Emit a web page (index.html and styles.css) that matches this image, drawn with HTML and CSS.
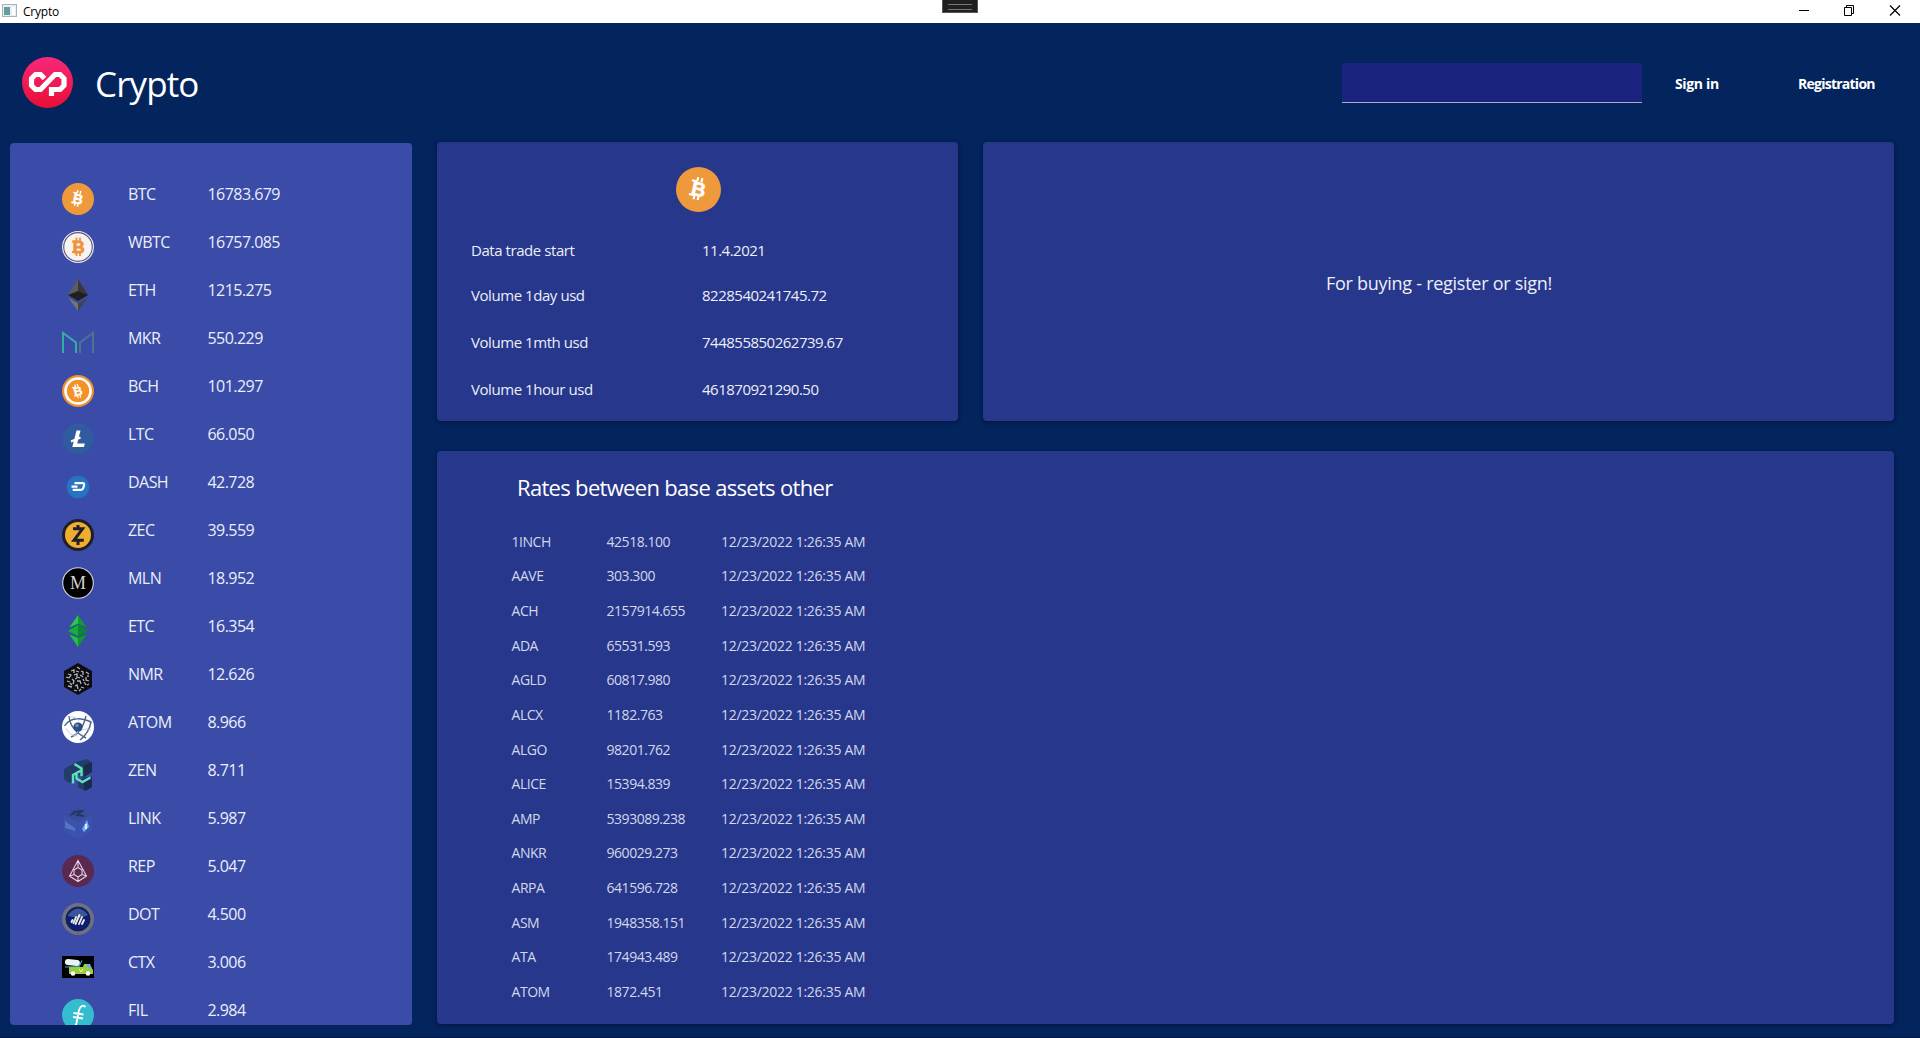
FILE: index.html
```html
<!DOCTYPE html>
<html lang="en">
<head>
<meta charset="utf-8">
<title>Crypto</title>
<link rel="stylesheet" href="styles.css">
</head>
<body>
<div class="titlebar">
  <svg class="app-icon" width="16" height="14" viewBox="0 0 16 14"><rect x=".5" y=".5" width="14" height="12" fill="#e9eef2" stroke="#a9b2ba"/><rect x="2" y="3" width="6" height="8" fill="#5f9f9c"/><rect x="10" y="3" width="3" height="8" fill="#fff"/></svg>
  <span class="app-name">Crypto</span>
  <svg class="window-buttons" width="104" height="14" viewBox="0 0 104 14" fill="none" stroke="#000" stroke-width="1"><path d="M0 7.500h10M45.500 4.500h7v8h-7zM47.500 4.500v-2h7v8h-2"/><path stroke-width="1.200" d="M91 2.500l10 10M101 2.500l-10 10"/></svg>
  <div class="debug-handle"></div>
</div>
<header class="header">
  <svg class="logo" width="51" height="51" viewBox="0 0 51 51"><defs><linearGradient id="lg" x1="0" y1="0" x2="0" y2="1"><stop offset="0" stop-color="#f6287a"/><stop offset="1" stop-color="#e80f35"/></linearGradient></defs><circle cx="25.500" cy="25.500" r="25.500" fill="url(#lg)"/><path d="M22.500 21.500l-4-4h-5L9.500 21.500v7l4 4h5L33 17.500h5l4 4v7L38 32.500h-8.500V39" fill="none" stroke="#fff" stroke-width="5.200"/></svg>
  <h1 class="brand">Crypto</h1>
  <input class="search" type="text" aria-label="Search">
  <a class="link sign">Sign in</a>
  <a class="link registration">Registration</a>
</header>
<main class="main">
  <ul class="coins">
    <li><svg class="icon" viewBox="0 0 32 32"><circle cx="16" cy="16" r="16" fill="#ee9a3c"/><g transform="rotate(12 16 16)" fill="#fff" stroke="#fff" stroke-width="1.500"><path d="M14 7.500v3M17 7.500v3M14 20.500v3M17 20.500v3M10 10.500h4M10 20.500h4"/><text class="glyph" x="16" y="20.800" font-size="14" stroke-width=".4">B</text></g></svg><span>BTC</span><span>16783.679</span></li>
    <li><svg class="icon" viewBox="0 0 32 32"><circle cx="16" cy="16" r="16" fill="#ececf2"/><circle cx="16" cy="16" r="14.300" fill="#f6f3f2" stroke="#5d587c" stroke-width="1.200"/><g fill="#f0923a" stroke="#f0923a" stroke-width="1.900"><path d="M14.500 6.500v4M18 6.500v4M14.500 21v4M18 21v4M10 10.500h5M10 21h5"/><text class="glyph" x="16.800" y="21.800" font-size="16.500" stroke-width=".8">B</text></g></svg><span>WBTC</span><span>16757.085</span></li>
    <li><svg class="icon" viewBox="0 0 32 32"><path d="M16 0L6 16l10 6z" fill="#5d5d5d"/><path d="M16 0l10 16-10 6z" fill="#393939"/><path d="M6 16l10-4 10 4-10 6z" fill="#202022"/><path d="M6 18.500l10 6V32z" fill="#747474"/><path d="M26 18.500l-10 6V32z" fill="#444"/></svg><span>ETH</span><span>1215.275</span></li>
    <li><svg class="icon" viewBox="0 0 32 32" fill="none" stroke-width="2"><path d="M1 26V6l13 9.500V26" stroke="#38ad9f"/><path d="M18 26V15.500L31 6v20" stroke="#4d7390"/></svg><span>MKR</span><span>550.229</span></li>
    <li><svg class="icon" viewBox="0 0 32 32"><circle cx="16" cy="16" r="16" fill="#f0902d"/><circle cx="16" cy="16" r="12.500" fill="#f39229" stroke="#fff" stroke-width="2.700"/><g transform="rotate(-14 16 16)" fill="#fff" stroke="#fff" stroke-width="1.300"><path d="M14.500 9v3M17 9v3M14.500 20v3M17 20v3M11 11.500h4M11 20h4"/><text class="glyph" x="16" y="20.300" font-size="12" stroke-width=".3">B</text></g></svg><span>BCH</span><span>101.297</span></li>
    <li><svg class="icon" viewBox="0 0 32 32"><circle cx="16" cy="16" r="15.500" fill="#315b9f"/><path d="M14.500 7.500h4l-3.300 13h7.600l-.8 3.500H10.300z" fill="#fff"/><path d="M9 18.500l9.500-4" stroke="#fff" stroke-width="2.200"/></svg><span>LTC</span><span>66.050</span></li>
    <li><svg class="icon" viewBox="0 0 32 32"><circle cx="16" cy="16" r="11.300" fill="#2573c2"/><path d="M12.500 12.200h8.200q1.800 0 1.400 1.800l-.8 3q-.5 1.900-2.300 1.900h-8.300M9.500 15.700h6" fill="none" stroke="#fff" stroke-width="2.200"/></svg><span>DASH</span><span>42.728</span></li>
    <li><svg class="icon" viewBox="0 0 32 32"><circle cx="16" cy="16" r="14.500" fill="#efae30" stroke="#211e29" stroke-width="3"/><path d="M11 9.800h9.500L12 21.300h9.800M16 6v4M16 21v5" fill="none" stroke="#211e29" stroke-width="3"/></svg><span>ZEC</span><span>39.559</span></li>
    <li><svg class="icon" viewBox="0 0 32 32"><circle cx="16" cy="16" r="15.300" fill="#000" stroke="#d6d6de" stroke-width="1.100"/><text class="serif" x="16" y="22" font-size="18" fill="#d2d2d2">M</text></svg><span>MLN</span><span>18.952</span></li>
    <li><svg class="icon" viewBox="0 0 32 32"><path d="M16 0L7 13l9-4z" fill="#2fc653"/><path d="M16 0l9 13-9-4z" fill="#139a35"/><path d="M6 16l10-6v11z" fill="#18ad3d"/><path d="M26 16l-10-6v11z" fill="#0b8930"/><path d="M7 19l9 4v9z" fill="#27bd4b"/><path d="M25 19l-9 4v9z" fill="#12982f"/><path d="M7 13l9-4 9 4M7 19l9 3 9-3" fill="none" stroke="#107a40" stroke-width="1"/></svg><span>ETC</span><span>16.354</span></li>
    <li><svg class="icon" viewBox="0 0 32 32"><path d="M16 0l14 8v16l-14 8-14-8V8z" fill="#0b0c12"/><path d="M15 4l3 2M9 8l3-1v3M19 8l2 1v3M24 9l3 2M6 11l3 1-2 3M12 12l3-1v3l3 1M18 12l3 2M24 14v3l3 1M5 18l3 1M10 16l2 2-1 3M15 18h3l1 3M22 19l2 3M6 23l4 1M13 23l2-1 1 4M19 24l3 1M25 22l2-1M12 27l3 1M17 28l2-2M14 8l3 1M4 14l3 1M21 16l1 2M8 20l2 2M15 15l-2 1M26 12v2" fill="none" stroke="#b6b5b9" stroke-width="1.300"/></svg><span>NMR</span><span>12.626</span></li>
    <li><svg class="icon" viewBox="0 0 32 32"><circle cx="16" cy="16" r="16" fill="#fff"/><g fill="none" stroke="#49658d" stroke-width="1.400"><path d="M2.500 15Q10 3 29 11Q27 22 18 29M7 5Q8 19 24 27M9 26Q20 22 24 5"/><path d="M7 6q7-1 10 4M29 19q-8-4-17 6M4 17q3 8 12 8" stroke="#bcc6d3" stroke-width=".8"/></g><circle cx="16" cy="16" r="4.600" fill="#294c84"/><circle cx="15" cy="14.500" r="1.700" fill="#7390b8"/></svg><span>ATOM</span><span>8.966</span></li>
    <li><svg class="icon" viewBox="0 0 32 32"><path d="M12 4l13-4 5 4v9l-8 5-7-3zM2 10l9-5 6 5-2 10-8 4-5-4zM16 23l5-5h9v10l-7 4-7-4z" fill="#223d68"/><path d="M22 6l8-3v10l-8 5zM21 22l9-4v10l-7 4z" fill="#192b50"/><path d="M12.500 5l7 4.500V17M11 24.500V16l8-4.500M14.500 14v5.500l6 3.500 8-4.500" fill="none" stroke="#5de2ba" stroke-width="2.400"/></svg><span>ZEN</span><span>8.711</span></li>
    <li><svg class="icon" viewBox="0 0 32 32"><path d="M16 1l14 7v16l-14 8-14-8V8z" fill="#3b52ae"/><path d="M16 1l14 7-14 7L2 8z" fill="#384d9a"/><path d="M11 5l9-1-5 4 7 1M8 8l5-2" fill="none" stroke="#253662" stroke-width="1.800"/><path d="M3 14l10 7v3L3 21z" fill="#5674c4"/><path d="M20 22l5-9 2 7-5 5z" fill="#70b0ee"/><path d="M24 17v5" stroke="#fff" stroke-width="1.500"/><path d="M16 15v17" stroke="#3152a0"/></svg><span>LINK</span><span>5.987</span></li>
    <li><svg class="icon" viewBox="0 0 32 32"><circle cx="16" cy="16" r="16" fill="#5b2850"/><path d="M16 5.500L7.500 21l8.500 5.500 8.500-5.500zM12 15l4-2.500 4 2.500v4.500L16 22l-4-2.500zM16 5.500v7M7.500 21l4.500-1.500M24.500 21L20 19.500M16 22v4.500" fill="none" stroke="#e5cfe0" stroke-width="1.100"/></svg><span>REP</span><span>5.047</span></li>
    <li><svg class="icon" viewBox="0 0 32 32"><circle cx="16" cy="16" r="14" fill="#0c1d75" stroke="#6d7181" stroke-width="4"/><circle cx="16" cy="16" r="12" fill="none" stroke="#17203d" stroke-width="1"/><path d="M6 12q10-13 20 0-6 4-20 1z" fill="#3c559a"/><path d="M10.500 17l-1 2M14 14l-2.500 6M17.500 12l-4 9M20 14l-3 7M22 17l-2 4" stroke="#ecebe0" stroke-width="1.900" stroke-linecap="round"/></svg><span>DOT</span><span>4.500</span></li>
    <li><svg class="icon" viewBox="0 0 32 32"><path d="M0 5h32v22H0z" fill="#000"/><path d="M7 16h14l1-3h5l4 6v4H7z" fill="#9dce39"/><path d="M25 13h3l2 5-5-1z" fill="#65b9d3"/><rect x="3" y="8.500" width="15" height="6" rx="3" fill="#e7f4ef" transform="rotate(6 10 11)"/><path d="M3 16l14-.500 3-6" fill="none" stroke="#48a9cd" stroke-width="1.200"/><circle cx="11" cy="22.500" r="2.300" fill="#fff"/><circle cx="26" cy="22.500" r="2.300" fill="#fff"/><path d="M17 18l2 3 2-3" fill="none" stroke="#f2f8cf"/></svg><span>CTX</span><span>3.006</span></li>
    <li><svg class="icon" viewBox="0 0 32 32"><circle cx="16" cy="16" r="16" fill="#35bdcf"/><path d="M23.500 8q-4-3.500-6.500 3l-2.500 13q-1.500 5-5 2.500M11.500 14l10 1.500M11 18l10 1.500" fill="none" stroke="#fff" stroke-width="1.800"/></svg><span>FIL</span><span>2.984</span></li>
  </ul>
  <div class="content">
    <section class="card details">
      <svg class="coin-large" viewBox="0 0 32 32"><circle cx="16" cy="16" r="16" fill="#ee9a3c"/><g transform="rotate(12 16 16)" fill="#fff" stroke="#fff" stroke-width="1.500"><path d="M14 7.500v3M17 7.500v3M14 20.500v3M17 20.500v3M10 10.500h4M10 20.500h4"/><text class="glyph" x="16" y="20.800" font-size="14" stroke-width=".4">B</text></g></svg>
      <dl class="facts">
        <dt>Data trade start</dt><dd>11.4.2021</dd>
        <dt>Volume 1day usd</dt><dd>8228540241745.72</dd>
        <dt>Volume 1mth usd</dt><dd>744855850262739.67</dd>
        <dt>Volume 1hour usd</dt><dd>461870921290.50</dd>
      </dl>
    </section>
    <section class="card notice"><p>For buying - register or sign!</p></section>
    <section class="card rates">
      <h2>Rates between base assets other</h2>
      <ul>
        <li><span>1INCH</span><span>42518.100</span><span class="date">12/23/2022 1:26:35 AM</span></li>
        <li><span>AAVE</span><span>303.300</span><span class="date">12/23/2022 1:26:35 AM</span></li>
        <li><span>ACH</span><span>2157914.655</span><span class="date">12/23/2022 1:26:35 AM</span></li>
        <li><span>ADA</span><span>65531.593</span><span class="date">12/23/2022 1:26:35 AM</span></li>
        <li><span>AGLD</span><span>60817.980</span><span class="date">12/23/2022 1:26:35 AM</span></li>
        <li><span>ALCX</span><span>1182.763</span><span class="date">12/23/2022 1:26:35 AM</span></li>
        <li><span>ALGO</span><span>98201.762</span><span class="date">12/23/2022 1:26:35 AM</span></li>
        <li><span>ALICE</span><span>15394.839</span><span class="date">12/23/2022 1:26:35 AM</span></li>
        <li><span>AMP</span><span>5393089.238</span><span class="date">12/23/2022 1:26:35 AM</span></li>
        <li><span>ANKR</span><span>960029.273</span><span class="date">12/23/2022 1:26:35 AM</span></li>
        <li><span>ARPA</span><span>641596.728</span><span class="date">12/23/2022 1:26:35 AM</span></li>
        <li><span>ASM</span><span>1948358.151</span><span class="date">12/23/2022 1:26:35 AM</span></li>
        <li><span>ATA</span><span>174943.489</span><span class="date">12/23/2022 1:26:35 AM</span></li>
        <li><span>ATOM</span><span>1872.451</span><span class="date">12/23/2022 1:26:35 AM</span></li>
      </ul>
    </section>
  </div>
</main>
</body>
</html>
```

FILE: styles.css
```css
* { box-sizing: border-box; margin: 0; padding: 0; }
body {
  width: 1920px;
  height: 1038px;
  overflow: hidden;
  background: #03245c;
  color: #eceef8;
  font: 16px/22px "Open Sans", "Noto Sans", sans-serif;
  letter-spacing: -0.55px;
}
ul { list-style: none; }

.titlebar {
  position: relative;
  display: flex;
  align-items: flex-start;
  height: 23px;
  background: #fff;
  color: #000;
}
.app-icon { margin: 4px 0 0 2px; }
.app-name { margin-left: 5px; font-size: 12px; line-height: 23px; letter-spacing: -0.2px; }
.window-buttons { margin: 3px 17px 0 auto; }
.debug-handle {
  position: absolute;
  left: 942px;
  top: 0;
  width: 36px;
  height: 13px;
  border: 1px solid #555;
  border-top: 0;
  background: #202020;
}
.debug-handle::before {
  content: "";
  display: block;
  width: 24px;
  height: 4px;
  margin: 4px auto 0;
  border: solid #777;
  border-width: 1px 0;
}

.header { display: flex; align-items: flex-start; height: 119px; padding: 34px 0 0 22px; }
.brand {
  width: 180px;
  margin-left: 22px;
  color: #fff;
  font-size: 35px;
  font-weight: 400;
  line-height: 54px;
  letter-spacing: -0.9px;
}
.search {
  width: 300px;
  height: 40px;
  margin: 6px 0 0 auto;
  border: 0;
  border-bottom: 1px solid #a4aed0;
  border-radius: 2px 2px 0 0;
  background: #1a237e;
}
.link { color: #fff; font-size: 14px; font-weight: 700; line-height: 22px; margin-top: 16px; white-space: nowrap; letter-spacing: -0.75px; }
.sign { width: 123px; margin-left: 33px; letter-spacing: -0.35px; }
.registration { width: 122px; }

.main { display: flex; gap: 25px; height: 896px; padding-left: 10px; border-bottom: 1px solid #021a45; }
.coins {
  width: 402px;
  height: 882px;
  margin-top: 1px;
  padding: 40px 0 0 52px;
  overflow: hidden;
  border-radius: 4px;
  background: #3a4ca8;
}
.coins li { display: grid; grid-template-columns: 66px 79.500px 1fr; height: 48px; align-items: start; }
.icon { width: 32px; height: 32px; }
.glyph { font-family: "Liberation Sans", sans-serif; font-weight: 700; text-anchor: middle; letter-spacing: 0; }
.serif { font-family: "Liberation Serif", serif; text-anchor: middle; letter-spacing: 0; }

.content {
  display: grid;
  grid-template: 279px 573px / 521px 911px;
  gap: 30px 25px;
}
.card { border-radius: 4px; background: #27378b; box-shadow: 0 1px 4px rgba(0, 0, 20, .4); }
.details { padding: 25px 0 0 34px; }
.coin-large { display: block; width: 45px; height: 45px; margin-left: 205px; }
.facts {
  display: grid;
  grid-template: 45px 47px 47px 22px / 231px 1fr;
  margin-top: 27px;
  font-size: 15px;
  letter-spacing: -0.5px;
}
.facts dt { letter-spacing: -0.44px; }
.notice { display: flex; align-items: center; justify-content: center; padding: 3px 0 0 1px; }
.notice p { font-size: 18px; letter-spacing: -0.27px; }
.rates { grid-column: 1 / 3; padding: 20px 0 0 74px; }
.rates h2 {
  margin: 0 0 21.800px 6px;
  color: #fff;
  font-size: 22px;
  font-weight: 400;
  line-height: 32px;
  letter-spacing: -0.68px;
}
.rates li {
  display: grid;
  grid-template-columns: 95px 114.500px 1fr;
  font-size: 14px;
  line-height: 34.620px;
  letter-spacing: -0.46px;
  color: #d3d7eb;
  padding-left: 0.5px;
}
.rates .date { letter-spacing: -0.29px; }
```
